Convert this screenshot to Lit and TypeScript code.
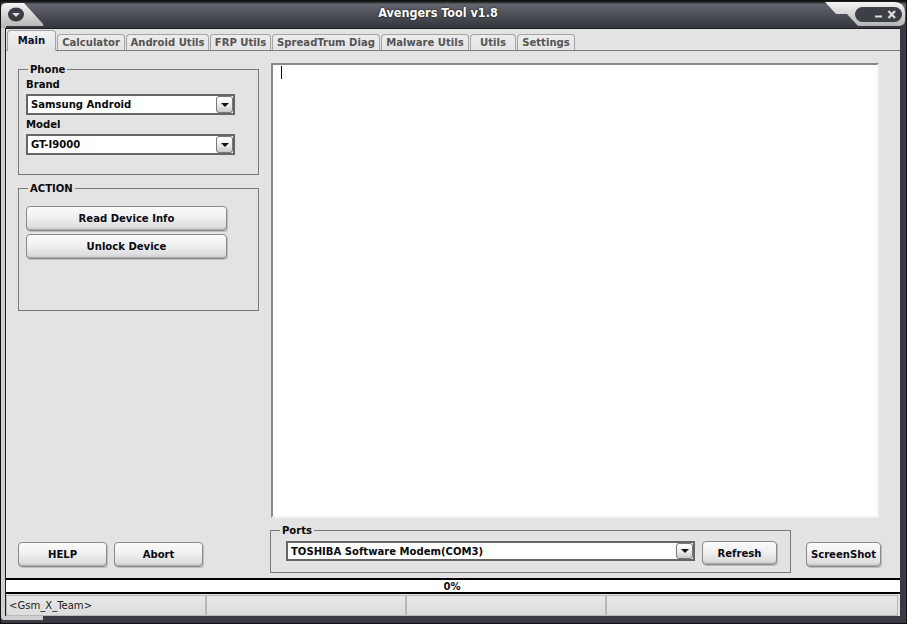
import { LitElement, html, css } from "lit";
import { customElement } from "lit/decorators.js";

const TABS = ["Main", "Calculator", "Android Utils", "FRP Utils", "SpreadTrum Diag", "Malware Utils", "Utils", "Settings"];
const WIDTHS = [49, 68, 83, 61, 108, 88, 46, 58];

@customElement("app-root")
export class AppRoot extends LitElement {
  static styles = css`
    :host { display: block; width: 907px; height: 624px; position: relative; overflow: hidden; background: #383b42;
      font: bold 11.2px "DejaVu Sans", "Liberation Sans", sans-serif; font-stretch: condensed; color: #0a0a0a; }
    .title { height: 28px; box-sizing: border-box; padding: 5px 31px 0 0; text-align: center; color: #fff; font-size: 12.5px; line-height: 16px;
      background: linear-gradient(#1c1d20 0, #1c1d20 2px, #63666e 4px, #4e5158 14px, #34373d 27px); text-shadow: 0 0 2px #000; }
    .edge { position: absolute; inset: 0; pointer-events: none; box-shadow: inset 0 0 0 1px #111; }
    .overlay { position: absolute; left: 0; top: 0; pointer-events: none; }
    .frame { margin: 0 7px 0 5px; border-top: 1px solid #1c1d20; border-left: 1px solid #1c1d20; height: 587px; background: #e3e3e3; }
    .tabs { display: flex; gap: 1px; align-items: flex-end; height: 22px; padding-left: 1px; border-bottom: 1px solid #7c7c7c; box-sizing: border-box; }
    .tab { height: 16px; line-height: 15px; text-align: center; color: #555; background: linear-gradient(#ececec, #e4e4e4); border: 1px solid #a5a5a5; border-bottom: none; border-radius: 4px 4px 0 0; box-sizing: border-box; flex: none; }
    .tab.on { height: 21px; line-height: 20px; color: #0a1030; background: linear-gradient(#f2f2f2, #e3e3e3); border-color: #a0a0a0; margin-bottom: -1px; border-bottom: 1px solid #e3e3e3; }
    .content { display: flex; padding: 12px 20px 0 12px; height: 467px; box-sizing: border-box; gap: 12px; }
    .left { width: 241px; flex: none; display: flex; flex-direction: column; gap: 7px; }
    fieldset { margin: 0; padding: 0 7px; border: 1px solid #7a7a7a; min-width: 0; box-sizing: border-box; }
    legend { padding: 0 2px; margin-left: 2px; line-height: 13px; }
    .phone { height: 112px; width: 241px; }
    .action { height: 129px; }
    .lbl { line-height: 14px; height: 14px; margin: 3px 0 2px; }
    .phone legend + .lbl { margin-top: 2px; }
    .combo { height: 21px; border: 2px solid #666; background: #fff; display: flex; align-items: center; justify-content: space-between; padding-left: 3px; box-sizing: border-box; width: 209px; }
    .arrow { width: 17px; height: 17px; border: 1px solid #777; border-radius: 3px; background: linear-gradient(#fff, #e8e8e8 60%, #c8c8c8); display: flex; align-items: center; justify-content: center; box-sizing: border-box; flex: none; }
    .arrow svg { display: block; }
    .btn { display: flex; align-items: center; justify-content: center; border: 1px solid #8a8a8a; border-radius: 4px; box-sizing: border-box;
      background: linear-gradient(#fbfbfb, #f0f0f0 45%, #dedede 85%, #c6c6c6); box-shadow: inset 0 -1px 0 #aaa, 1px 1px 0 #bdbdbd; color: #0a0a14; }
    .action .btn { width: 201px; height: 25px; margin-bottom: 3px; }
    .stack { padding-top: 11px; }
    .log { width: 608px; height: 455px; box-sizing: border-box; background: #fff; border: 2px solid; border-color: #8a8a8a #f2f2f2 #f2f2f2 #8a8a8a; position: relative; }
    .caret { position: absolute; left: 8px; top: 1px; width: 1px; height: 13px; background: #000; }
    .bottom { display: flex; align-items: flex-start; height: 49px; padding-left: 12px; margin-top: 6px; }
    .bottom > .btn { height: 25px; margin-top: 18px; }
    .help { width: 89px; margin-right: 7px; }
    .abort { width: 89px; margin-right: 67px; }
    .ports { width: 521px; height: 49px; padding: 0 0 0 15px; }
    .ports legend { margin-left: -6px; padding: 0 2px; }
    .row { display: flex; gap: 7px; align-items: flex-start; margin-top: 4px; }
    .ports .combo { width: 409px; height: 20px; }
    .ports .arrow { height: 16px; }
    .ports .btn { width: 75px; height: 24px; }
    .shot { width: 75px; margin-left: 15px; }
    .progress { height: 16px; margin-top: 5px; border: solid #000; border-width: 2px 0; background: #fff; text-align: center; line-height: 13px; box-sizing: border-box; color: #111; padding-right: 2px; }
    .status { display: flex; height: 21px; margin: 1px 2px 0 0; box-sizing: border-box; border: 1px solid #b8b8b8; background: linear-gradient(#e8e8e8, #dcdcdc); font-weight: normal; line-height: 19px; color: #222; }
    .status div { width: 200px; border-right: 2px solid #b8b8b8; padding-left: 2px; box-sizing: border-box; flex: none; }
    .status div:last-child { flex: 1; border: none; }
  `;

  private combo(text: string) {
    return html`<div class="combo"><span>${text}</span><span class="arrow"><svg width="8" height="4" viewBox="0 0 8 4"><path d="M0 0h8L4 4z" fill="#111"/></svg></span></div>`;
  }

  render() {
    return html`
      <div class="title">Avengers Tool v1.8</div>
      <div class="frame">
        <div class="tabs">
          ${TABS.map((t, i) => html`<div class="tab ${i === 0 ? "on" : ""}" style="width:${WIDTHS[i]}px">${t}</div>`)}
        </div>
        <div class="content">
          <div class="left">
            <fieldset class="phone">
              <legend>Phone</legend>
              <div class="lbl">Brand</div>
              ${this.combo("Samsung Android")}
              <div class="lbl">Model</div>
              ${this.combo("GT-I9000")}
            </fieldset>
            <fieldset class="action">
              <legend>ACTION</legend>
              <div class="stack">
                <div class="btn">Read Device Info</div>
                <div class="btn">Unlock Device</div>
              </div>
            </fieldset>
          </div>
          <div class="log"><div class="caret"></div></div>
        </div>
        <div class="bottom">
          <div class="btn help">HELP</div>
          <div class="btn abort">Abort</div>
          <fieldset class="ports">
            <legend>Ports</legend>
            <div class="row">
              ${this.combo("TOSHIBA Software Modem(COM3)")}
              <div class="btn">Refresh</div>
            </div>
          </fieldset>
          <div class="btn shot">ScreenShot</div>
        </div>
        <div class="progress">0%</div>
        <div class="status"><div>&lt;Gsm_X_Team&gt;</div><div></div><div></div><div></div></div>
      </div>
      <div class="edge"></div>
      <svg class="overlay" width="907" height="624" viewBox="0 0 907 624">
        <defs>
          <linearGradient id="chrome" x1="0" y1="0" x2="0" y2="1">
            <stop offset="0" stop-color="#f4f4f4"/><stop offset="1" stop-color="#b4b4b4"/>
          </linearGradient>
        </defs>
        <path d="M1 8Q1 3 8 3H24L43 24Q44 26 42 26H6V28H1z" fill="url(#chrome)"/>
        <path d="M1 28H5V616H43V620H4Q1 620 1 617z" fill="#cfcfcf"/>
        <ellipse cx="16" cy="14.5" rx="8" ry="7" fill="#3a3d43"/>
        <path d="M12 13h8l-4 4z" fill="#ddd"/>
        <path d="M825 2H895Q904 2 905 12V20Q905 26 898 26H858L847 14H836z" fill="url(#chrome)"/>
        <rect x="855" y="7" width="47" height="15" rx="7.5" fill="#3c3f46"/>
        <path d="M875 15.5h7v2h-7z" fill="#ddd"/>
        <path d="M888.5 11l6.5 7M895 11l-6.5 7" stroke="#ddd" stroke-width="2.2"/>
      </svg>
    `;
  }
}
